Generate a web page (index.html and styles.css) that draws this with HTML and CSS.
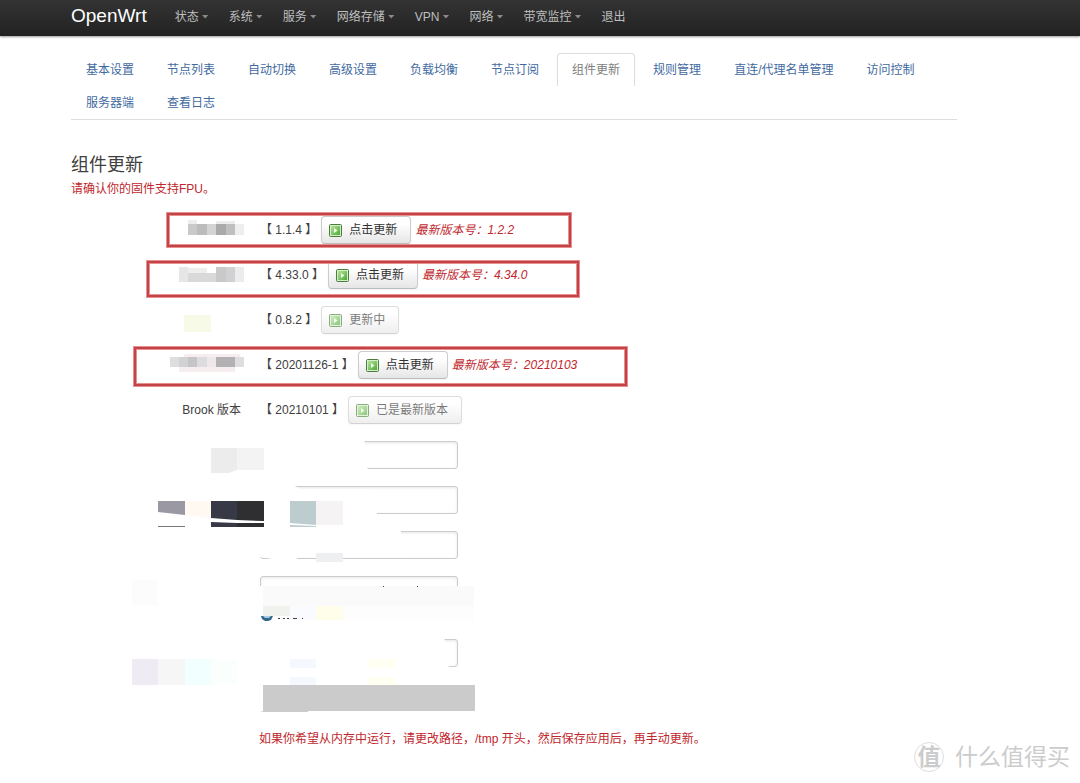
FILE: index.html
```html
<!DOCTYPE html>
<html lang="zh-CN">
<head>
<meta charset="utf-8">
<title>OpenWrt - 组件更新</title>
<link rel="stylesheet" href="styles.css">
</head>
<body>
<svg class="defs" aria-hidden="true">
  <defs>
    <linearGradient id="green" x1="0" y1="0" x2="1" y2="1"><stop offset="0" stop-color="#b5e39c"/><stop offset="1" stop-color="#4fa83a"/></linearGradient>
    <symbol id="go" viewBox="0 0 13 13">
      <rect x="0.5" y="0.5" width="12" height="12" rx="1" fill="#d3efc6" stroke="#4c7d3c"/>
      <rect x="2" y="2" width="9" height="9" fill="url(#green)"/>
      <path d="M5 4L8.5 6.5L5 9Z" fill="#efffe8"/>
    </symbol>
  </defs>
</svg>
<header class="topbar">
  <a class="brand" href="#">OpenWrt</a>
  <nav class="menu">
    <a class="drop" href="#">状态</a>
    <a class="drop" href="#">系统</a>
    <a class="drop" href="#">服务</a>
    <a class="drop" href="#">网络存储</a>
    <a class="drop" href="#">VPN</a>
    <a class="drop" href="#">网络</a>
    <a class="drop" href="#">带宽监控</a>
    <a href="#">退出</a>
  </nav>
</header>
<main class="content">
  <nav class="tabs">
    <a href="#">基本设置</a>
    <a href="#">节点列表</a>
    <a href="#">自动切换</a>
    <a href="#">高级设置</a>
    <a href="#">负载均衡</a>
    <a href="#">节点订阅</a>
    <a class="active" href="#">组件更新</a>
    <a href="#">规则管理</a>
    <a href="#">直连/代理名单管理</a>
    <a href="#">访问控制</a>
    <a href="#">服务器端</a>
    <a href="#">查看日志</a>
  </nav>
  <h1>组件更新</h1>
  <p class="warn">请确认你的固件支持FPU。</p>
  <form class="rows">
    <div class="row"><span class="name"></span><span class="version">【 1.1.4 】</span><button type="button"><svg><use href="#go"/></svg>点击更新</button><em>最新版本号：1.2.2</em></div>
    <div class="row"><span class="name"></span><span class="version">【 4.33.0 】</span><button type="button"><svg><use href="#go"/></svg>点击更新</button><em>最新版本号：4.34.0</em></div>
    <div class="row"><span class="name"></span><span class="version">【 0.8.2 】</span><button type="button" disabled><svg><use href="#go"/></svg>更新中</button></div>
    <div class="row"><span class="name"></span><span class="version">【 20201126-1 】</span><button type="button"><svg><use href="#go"/></svg>点击更新</button><em>最新版本号：20210103</em></div>
    <div class="row"><span class="name">Brook 版本</span><span class="version">【 20210101 】</span><button type="button" disabled><svg><use href="#go"/></svg>已是最新版本</button></div>
    <div class="row"><span class="name"></span><input type="text" aria-label="路径"></div>
    <div class="row"><span class="name"></span><input type="text" aria-label="路径"></div>
    <div class="row"><span class="name"></span><input type="text" aria-label="路径"></div>
    <div class="row helped"><span class="name"></span><input type="text" aria-label="路径"></div>
    <div class="row"><span class="name"></span><input type="text" aria-label="路径"></div>
    <div class="row"><span class="name"></span><input type="text" aria-label="路径"></div>
  </form>
  <p class="warn note">如果你希望从内存中运行，请更改路径，/tmp 开头，然后保存应用后，再手动更新。</p>
</main>
<svg class="marks" aria-hidden="true">
  <g fill="#fff">
    <path d="M255 436H364L368 474H255Z"/>
    <path d="M255 482H288L300 489H372L378 519H255Z"/>
    <path d="M255 527H400L406 557L300 557L290 562L255 556Z"/>
    <path d="M263 586H474V609H263Z" fill="#fafafa"/>
    <path d="M255 586H263V609H255ZM255 606H474V635H255Z"/>
    <path d="M255 635H444L450 675H255Z"/>
    <path d="M255 681H480V711H255ZM308 709H480V718H308Z"/>
  </g>
  <g>
    <path d="M188 224H197V235H188Z" fill="#c9c9c9"/><path d="M197 224H207V235H197Z" fill="#bcbcbc"/><path d="M207 224H216V235H207Z" fill="#d4d4d4"/>
    <path d="M216 224H226V235H216Z" fill="#aaa"/><path d="M226 224H235V235H226Z" fill="#bfbfbf"/><path d="M235 224H244V235H235Z" fill="#eee"/><path d="M188 220H197V224H188ZM216 221H235V224H216Z" fill="#ededed"/>
    <path d="M179 267H188V282H179Z" fill="#e6e6e6"/><path d="M188 273H216V282H188Z" fill="#d9d9d9"/><path d="M188 268H207V273H188Z" fill="#eeeeec"/>
    <path d="M216 267H226V282H216Z" fill="#c9c9c9"/><path d="M226 267H235V282H226Z" fill="#d1d1d3"/><path d="M235 267H244V282H235Z" fill="#ececec"/>
    <path d="M184 315H211V332H184Z" fill="#f7fae6"/>
    <path d="M170 357H179V367H170Z" fill="#dedee0"/><path d="M179 357H188V367H179Z" fill="#d2d2d4"/><path d="M188 357H197V367H188Z" fill="#c5c5c8"/><path d="M197 357H207V367H197Z" fill="#dcdce0"/><path d="M207 357H216V367H207Z" fill="#eee8ea"/>
    <path d="M216 357H235V367H216Z" fill="#b3b1b3"/><path d="M235 357H244V367H235Z" fill="#dedee0"/><path d="M179 367H235V372H179ZM184 354H240V357H184Z" fill="#f6eeee"/>
    <path d="M211 448H237V470L229 473H211Z" fill="#ececec"/><path d="M237 448H264V470H237Z" fill="#f3f3f3"/>
    <path d="M158 501H185V515L158 512Z" fill="#9a99a3"/><path d="M158 526.5H185" stroke="#777"/><path d="M185 501H211V518L185 515Z" fill="#fff9f1"/>
    <path d="M211 501H237V520L211 518ZM211 522L237 523V527H211Z" fill="#383946"/><path d="M237 501H264V521L237 520ZM237 523H264V527H237Z" fill="#2f2f31"/>
    <path d="M290 501H316V525L290 523ZM290 525L316 526V527H290Z" fill="#bdcdcf"/><path d="M316 501H343V525H316Z" fill="#f6f3f5"/>
    <path d="M316 553H343V562H316Z" fill="#eeeff1"/>
    <path d="M132 580H158V606H132Z" fill="#fcfcfc"/><path d="M263 606H290V616H263Z" fill="#f0f3ed"/><path d="M290 606H316V620H290Z" fill="#fafbff"/><path d="M316 606H343V620H316Z" fill="#fffeea"/><path d="M343 606H474V621H343Z" fill="#fdfdfd"/>
    <path d="M132 659H158V685H132Z" fill="#eeebf5"/><path d="M158 659H185V685H158Z" fill="#f6f6f7"/><path d="M185 659H211V685H185Z" fill="#f1fffe"/><path d="M211 659H237V685H211Z" fill="#fafffe"/>
    <path d="M290 659H316V668H290ZM290 677H316V685H290Z" fill="#f5f9ff"/><path d="M369 659H396V668H369ZM369 677H396V685H369Z" fill="#fffff2"/>
    <path d="M263 685H475V711H263Z" fill="#cbcbcb"/>
    <path d="M261 616H273L271 620L268 621H265L262 619Z" fill="#31688e"/><path d="M263 616H271L269 618H265Z" fill="#a9cde2"/>
    <path d="M278 618.5H280M283 618.5H285M287 618.5H289M293 618.5H297M302 618.5H303M383 586.5H384M417 586.5H418" stroke="#444"/>
  </g>
  <g fill="none" stroke="#e98f8f" stroke-width="4">
    <rect x="168" y="214" width="402" height="32"/><rect x="148" y="262" width="430" height="34"/><rect x="135" y="348" width="491" height="37"/>
  </g>
  <g fill="none" stroke="#c24448" stroke-width="2">
    <rect x="168" y="214" width="402" height="32"/><rect x="148" y="262" width="430" height="34"/><rect x="135" y="348" width="491" height="37"/>
  </g>
</svg>
<div class="watermark"><span class="seal">值</span><span>什么值得买</span></div>
</body>
</html>
```
FILE: styles.css
```css
* { box-sizing: border-box; }

body {
  position: relative;
  min-height: 100vh;
  margin: 0;
  background: #fff;
  color: #404040;
  font: 12px/18px "Liberation Sans", "Noto Sans CJK SC", sans-serif;
}

a { text-decoration: none; }

.defs { position: absolute; width: 0; height: 0; }

.topbar {
  display: flex;
  align-items: center;
  gap: 28px;
  height: 36px;
  padding: 0 71px 4px;
  background: linear-gradient(#333, #222);
  box-shadow: 0 1px 2px rgba(0, 0, 0, .4);
}

.brand { color: #fff; font-size: 19px; line-height: 24px; }

.menu { display: flex; gap: 20px; padding-top: 1px; }

.menu a { display: flex; align-items: center; gap: 3px; color: #bfbfbf; }

.drop::after {
  content: "";
  width: 7px;
  height: 4px;
  background: #8a8a8a;
  clip-path: polygon(0 0, 100% 0, 50% 100%);
}

.content { padding: 17px 123px 24px 71px; }

.tabs {
  display: flex;
  flex-wrap: wrap;
  column-gap: 3px;
  border-bottom: 1px solid #ddd;
}

.tabs a {
  height: 33px;
  padding: 7px 14px;
  border: 1px solid transparent;
  color: #3f6a9f;
}

.tabs .active {
  border-color: #ddd;
  border-bottom: 0;
  border-radius: 4px 4px 0 0;
  color: #808080;
}

h1 { margin: 30px 0 0; font-size: 18px; font-weight: 400; line-height: 30px; }

.warn { margin: 0; color: #c0272d; }

.rows { display: flex; flex-direction: column; gap: 17px; margin-top: 18px; }

.row { display: flex; align-items: center; height: 28px; }

.helped { align-items: flex-start; height: 46px; }

.name { width: 170px; margin-right: 19px; text-align: right; }

.version { margin-right: 4px; }

button {
  display: flex;
  align-items: center;
  gap: 7px;
  height: 28px;
  padding: 0 13px 0 7px;
  border: 1px solid #ccc;
  border-bottom-color: #bbb;
  border-radius: 4px;
  background: linear-gradient(#fff 25%, #e6e6e6);
  box-shadow: 0 1px 2px rgba(0, 0, 0, .05);
  color: #333;
  font: inherit;
}

button:disabled { opacity: .65; }

button svg { width: 13px; height: 13px; }

em { margin-left: 4px; color: #c0272d; }

input {
  width: 198px;
  height: 28px;
  padding: 4px;
  border: 1px solid #ccc;
  border-radius: 3px;
  box-shadow: inset 0 1px 3px rgba(0, 0, 0, .1);
  font: inherit;
}

.note { margin: 18px 0 0 188px; }

.marks {
  position: absolute;
  top: 0;
  left: 0;
  width: 100%;
  height: 100%;
  pointer-events: none;
}

.watermark {
  position: absolute;
  right: 10px;
  bottom: 10px;
  display: flex;
  align-items: center;
  gap: 11px;
  color: #ccc;
  font-size: 23px;
  line-height: 32px;
}

.seal {
  width: 30px;
  height: 30px;
  border: 1px solid #ddd;
  border-radius: 50%;
  font-weight: 700;
  line-height: 28px;
  text-align: center;
}
```
